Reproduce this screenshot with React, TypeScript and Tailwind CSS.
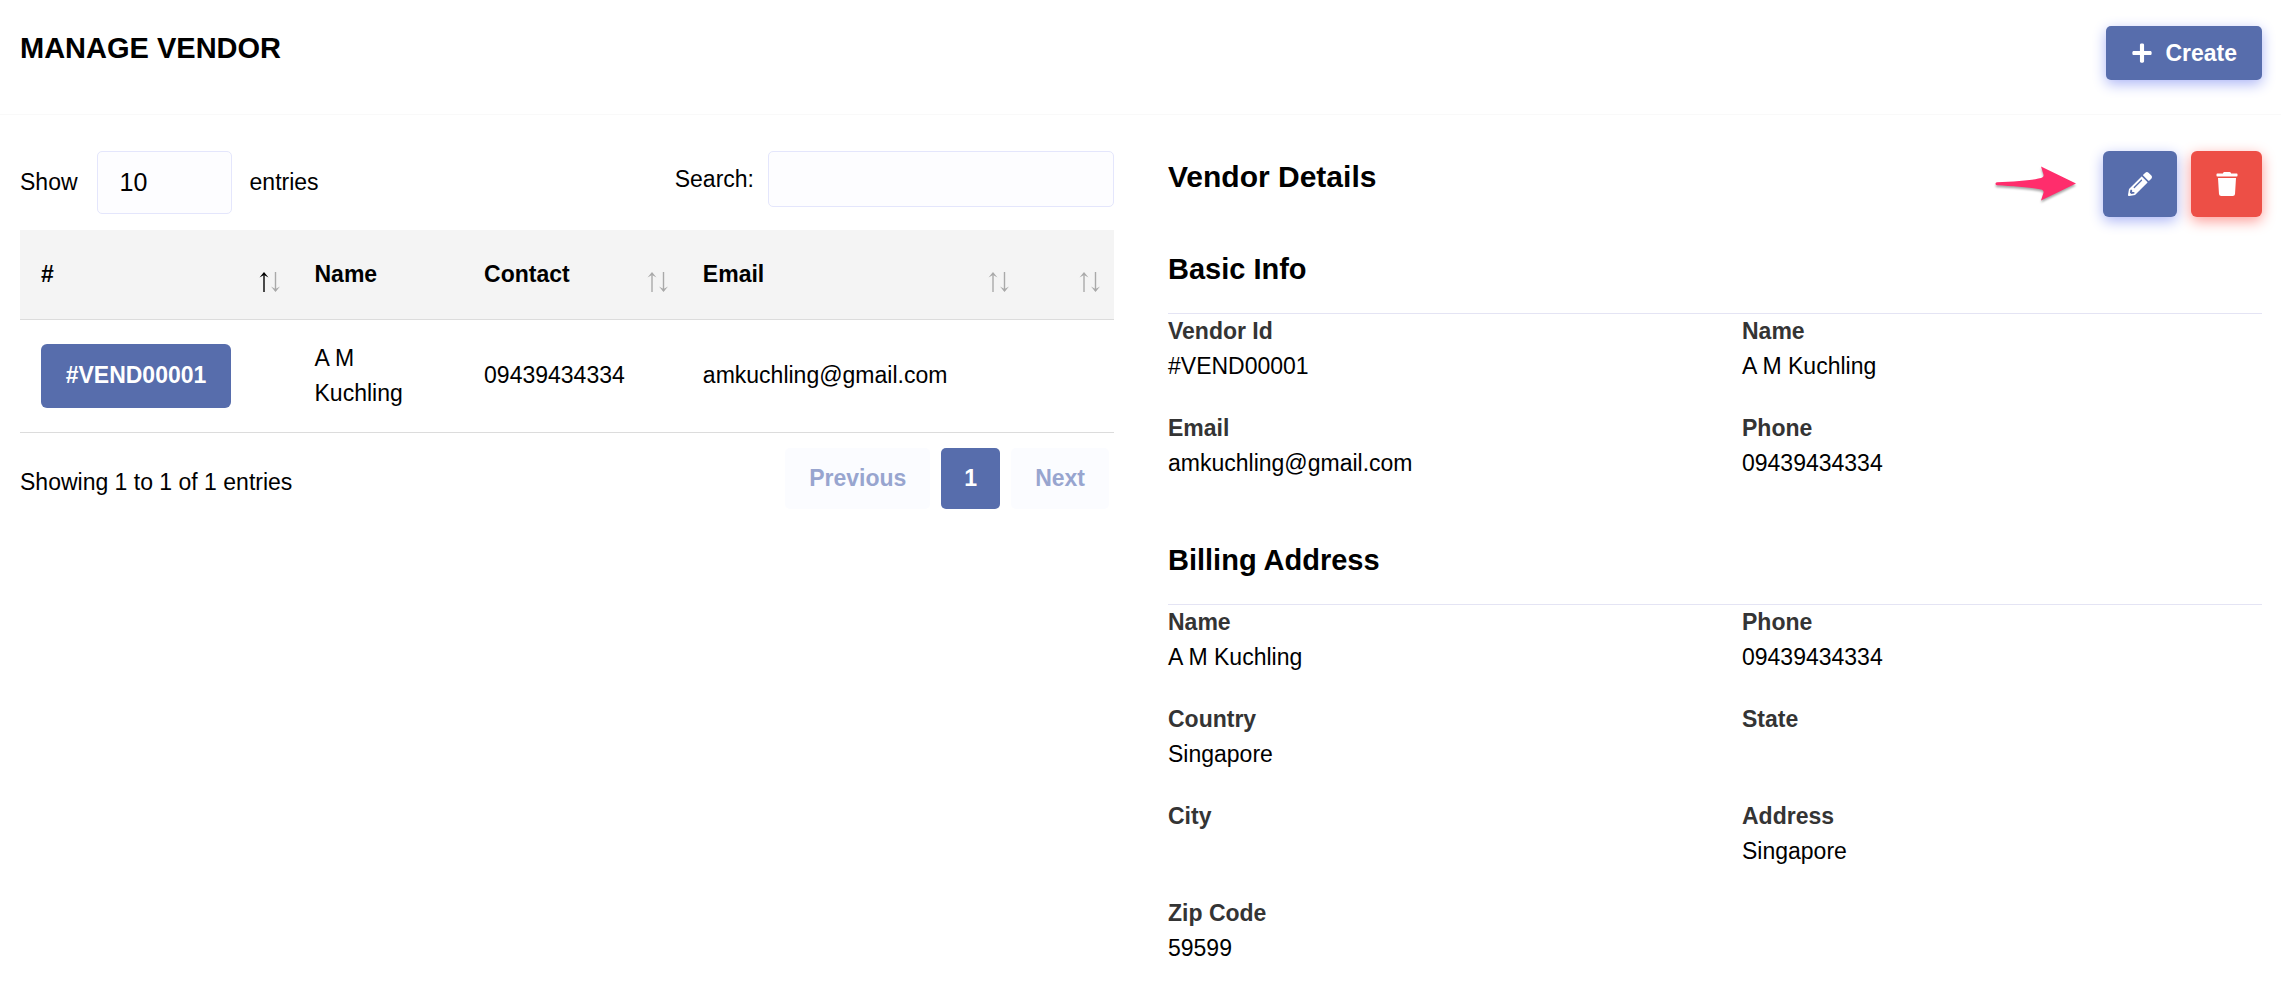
import { useState } from "react";
import { FaPencilAlt, FaPlus, FaTrash } from "react-icons/fa";

type Field = { label: string; value: string };

const basicInfo: Field[] = [
  { label: "Vendor Id", value: "#VEND00001" },
  { label: "Name", value: "A M Kuchling" },
  { label: "Email", value: "amkuchling@gmail.com" },
  { label: "Phone", value: "09439434334" },
];

const billingAddress: Field[] = [
  { label: "Name", value: "A M Kuchling" },
  { label: "Phone", value: "09439434334" },
  { label: "Country", value: "Singapore" },
  { label: "State", value: "" },
  { label: "City", value: "" },
  { label: "Address", value: "Singapore" },
  { label: "Zip Code", value: "59599" },
];

const columns = [
  { label: "#", width: "w-[25%]", sort: "asc" },
  { label: "Name", width: "w-[15.5%]", sort: "hidden" },
  { label: "Contact", width: "w-[20%]", sort: "none" },
  { label: "Email", width: "w-[31.2%]", sort: "none" },
  { label: "", width: "w-[8.3%]", sort: "none" },
];

function SortArrows({ ascending }: { ascending: boolean }) {
  return (
    <svg
      width="22"
      height="20"
      viewBox="0 0 22 20"
      fill="none"
      stroke="#000"
      aria-hidden="true"
    >
      <g opacity={ascending ? 1 : 0.3}>
        <path d="M5 1v19" strokeWidth="1.400" />
        <path d="M.5 5.500 5 0l4.500 5.500L5 3z" fill="#000" stroke="none" />
      </g>
      <g opacity="0.3">
        <path d="M16.500 0v19" strokeWidth="1.400" />
        <path d="m12 14.500 4.500 5.500 4.500-5.500-4.500 2.500z" fill="#000" stroke="none" />
      </g>
    </svg>
  );
}

function PointerArrow() {
  return (
    <svg
      width="82"
      height="38"
      viewBox="0 0 82 38"
      className="mr-3 mt-[14px] overflow-visible drop-shadow-[0_2px_1px_rgba(0,0,0,0.35)]"
      aria-hidden="true"
    >
      <path
        d="M2 17.2C18 16.6 37 15.4 46 13 48 12.400 49 11 48.500 9.400L46 1.500l35 17-35 17 2.500-7.700c.5-1.600-.5-3-2.500-3.400C37 22.400 18 21 2 20.200c-2-.1-2-2.900 0-3z"
        fill="#ff2d6c"
      />
    </svg>
  );
}

function Section({ title, fields }: { title: string; fields: Field[] }) {
  return (
    <section className="mt-[30px]">
      <h3 className="mb-[22px] text-[29px] font-bold leading-[44px]">{title}</h3>
      <dl className="grid grid-cols-2 gap-x-[54px] border-t border-[#e4e4f4]">
        {fields.map((field) => (
          <div key={field.label} className="mb-[27px] min-h-[70px]">
            <dt className="font-bold text-[#343434]">{field.label}</dt>
            <dd>{field.value}</dd>
          </div>
        ))}
      </dl>
    </section>
  );
}

function VendorTable() {
  const [search, setSearch] = useState("");
  const [pageSize, setPageSize] = useState("10");

  return (
    <div>
      <div className="flex items-start justify-between">
        <div className="flex items-center">
          <label htmlFor="page-size">Show</label>
          <select
            id="page-size"
            value={pageSize}
            onChange={(e) => setPageSize(e.target.value)}
            className="ml-[19px] mr-[18px] h-[63px] w-[135px] appearance-none rounded-[5px] border border-[#e4e6fc] bg-[#fdfdff] px-[22px] text-[25px]"
          >
            <option>10</option>
            <option>25</option>
            <option>50</option>
            <option>100</option>
          </select>
          <label htmlFor="page-size">entries</label>
        </div>
        <div className="flex items-center">
          <label htmlFor="search">Search:</label>
          <input
            id="search"
            type="search"
            value={search}
            onChange={(e) => setSearch(e.target.value)}
            className="ml-[14px] h-[56px] w-[346px] rounded-[5px] border border-[#e4e6fc] bg-[#fdfdff] px-4"
          />
        </div>
      </div>

      <table className="mt-4 w-full table-fixed border-collapse text-left">
        <thead>
          <tr className="h-[89px] border-b border-[#dcdcdc] bg-[#f4f4f4]">
            {columns.map((col, idx) => (
              <th key={idx} className={`${col.width} pl-[21px] pr-[13px] font-bold`}>
                <div className="flex items-center justify-between">
                  <span>{col.label}</span>
                  {col.sort !== "hidden" && (
                    <span className="mt-4">
                      <SortArrows ascending={col.sort === "asc"} />
                    </span>
                  )}
                </div>
              </th>
            ))}
          </tr>
        </thead>
        <tbody>
          <tr className="h-[113px] border-b border-[#dcdcdc]">
            <td className="px-[21px]">
              <a
                href="#vendor"
                className="inline-flex h-[64px] min-w-[190px] items-center justify-center rounded-[6px] bg-[#576dac] px-6 font-bold text-white"
              >
                #VEND00001
              </a>
            </td>
            <td className="px-[21px]">A M Kuchling</td>
            <td className="px-[21px]">09439434334</td>
            <td className="px-[21px]">amkuchling@gmail.com</td>
            <td />
          </tr>
        </tbody>
      </table>

      <div className="mt-[15px] flex items-center justify-between">
        <p className="pt-2">Showing 1 to 1 of 1 entries</p>
        <nav className="mr-[5px] flex gap-[11px] font-bold" aria-label="Pagination">
          <button
            type="button"
            className="h-[61px] rounded-[5px] bg-[#fbfcff] px-6 text-[#98a5cf]"
          >
            Previous
          </button>
          <button
            type="button"
            className="h-[61px] rounded-[5px] bg-[#576dac] px-[23px] text-white"
          >
            1
          </button>
          <button
            type="button"
            className="h-[61px] rounded-[5px] bg-[#fbfcff] px-6 text-[#98a5cf]"
          >
            Next
          </button>
        </nav>
      </div>
    </div>
  );
}

export default function App() {
  return (
    <div className="min-h-screen bg-white font-['Liberation_Sans',Arial,sans-serif] text-[23px] leading-[35px] text-black">
      <header className="flex items-start justify-between border-b border-[#f9f9f9] pb-[34px] pl-5 pr-[19px] pt-[26px]">
        <h1 className="text-[29px] font-bold leading-[44px]">MANAGE VENDOR</h1>
        <button
          type="button"
          className="flex h-[54px] items-center gap-3 rounded-[5px] bg-[#576dac] px-[25px] font-bold text-white shadow-[0_4px_14px_#acb5f6]"
        >
          <FaPlus size={22} />
          Create
        </button>
      </header>

      <main className="grid grid-cols-2 gap-[54px] pl-5 pr-[19px] pt-9">
        <VendorTable />

        <div>
          <div className="flex items-start justify-between">
            <h2 className="text-[30px] font-bold leading-[51px]">Vendor Details</h2>
            <div className="flex items-start gap-[14px]">
              <PointerArrow />
              <button
                type="button"
                aria-label="Edit vendor"
                className="flex h-[66px] w-[74px] items-center justify-center rounded-[6px] bg-[#576dac] text-white shadow-[0_4px_14px_#acb5f6]"
              >
                <FaPencilAlt size={24} />
              </button>
              <button
                type="button"
                aria-label="Delete vendor"
                className="flex h-[66px] w-[71px] items-center justify-center rounded-[6px] bg-[#ed4f46] text-white shadow-[0_4px_14px_#fd9b96]"
              >
                <FaTrash size={24} />
              </button>
            </div>
          </div>

          <Section title="Basic Info" fields={basicInfo} />
          <Section title="Billing Address" fields={billingAddress} />
        </div>
      </main>
    </div>
  );
}
